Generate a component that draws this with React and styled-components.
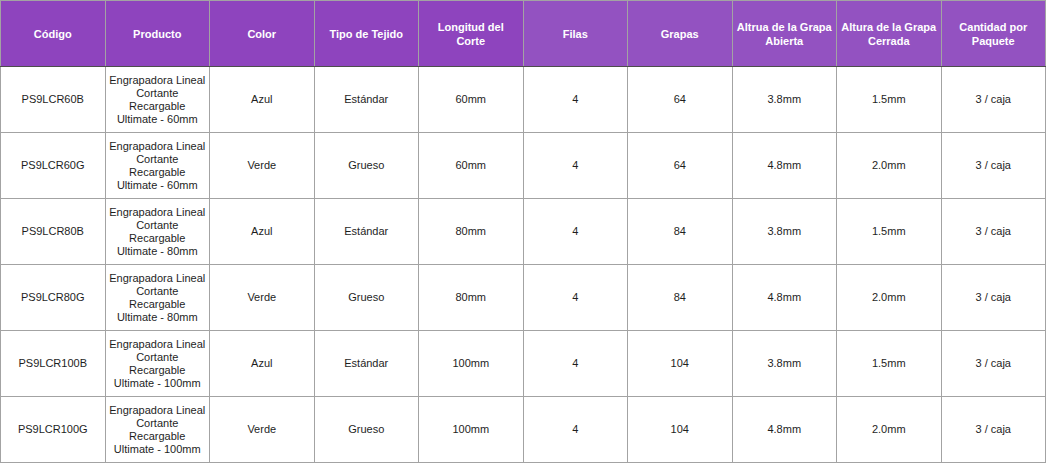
import React from "react";
import styled, { createGlobalStyle } from "styled-components";

const GlobalStyle = createGlobalStyle`
  body {
    margin: 0;
    background: #ffffff;
    font-family: "Liberation Sans", Arial, sans-serif;
  }
`;

const columns = [
  "Código",
  "Producto",
  "Color",
  "Tipo de Tejido",
  "Longitud del Corte",
  "Filas",
  "Grapas",
  "Altrua de la Grapa Abierta",
  "Altura de la Grapa Cerrada",
  "Cantidad por Paquete",
];

const rows = [
  ["PS9LCR60B", "Engrapadora Lineal Cortante Recargable Ultimate - 60mm", "Azul", "Estándar", "60mm", "4", "64", "3.8mm", "1.5mm", "3 / caja"],
  ["PS9LCR60G", "Engrapadora Lineal Cortante Recargable Ultimate - 60mm", "Verde", "Grueso", "60mm", "4", "64", "4.8mm", "2.0mm", "3 / caja"],
  ["PS9LCR80B", "Engrapadora Lineal Cortante Recargable Ultimate - 80mm", "Azul", "Estándar", "80mm", "4", "84", "3.8mm", "1.5mm", "3 / caja"],
  ["PS9LCR80G", "Engrapadora Lineal Cortante Recargable Ultimate - 80mm", "Verde", "Grueso", "80mm", "4", "84", "4.8mm", "2.0mm", "3 / caja"],
  ["PS9LCR100B", "Engrapadora Lineal Cortante Recargable Ultimate - 100mm", "Azul", "Estándar", "100mm", "4", "104", "3.8mm", "1.5mm", "3 / caja"],
  ["PS9LCR100G", "Engrapadora Lineal Cortante Recargable Ultimate - 100mm", "Verde", "Grueso", "100mm", "4", "104", "4.8mm", "2.0mm", "3 / caja"],
];

const Table = styled.table`
  width: 1046px;
  table-layout: fixed;
  border-collapse: collapse;
  font-size: 11px;
  line-height: 13px;
  color: #1e1e1e;
`;

const HeadCell = styled.th`
  height: 65px;
  padding: 0 4px;
  background: ${(p) => (p.$light ? "#9352c1" : "#8e44be")};
  color: #ffffff;
  font-weight: bold;
  line-height: 14px;
  text-align: center;
  vertical-align: middle;
  border: 1px solid #a3a3a3;
  border-bottom: 1px solid #4d4d4d;
`;

const Cell = styled.td`
  height: 65px;
  padding: 0 2px;
  text-align: center;
  vertical-align: middle;
  border: 1px solid #a3a3a3;
`;

const Break = styled.span`
  display: block;
`;

export default function App() {
  return (
    <>
      <GlobalStyle />
      <Table>
        <thead>
          <tr>
            {columns.map((c, i) => (
              <HeadCell key={c} $light={i >= 5}>
                {c === "Longitud del Corte" ? (
                  <>
                    <Break>Longitud del</Break>
                    <Break>Corte</Break>
                  </>
                ) : (
                  c
                )}
              </HeadCell>
            ))}
          </tr>
        </thead>
        <tbody>
          {rows.map((r) => (
            <tr key={r[0]}>
              {r.map((v, i) => (
                <Cell key={i}>{v}</Cell>
              ))}
            </tr>
          ))}
        </tbody>
      </Table>
    </>
  );
}
